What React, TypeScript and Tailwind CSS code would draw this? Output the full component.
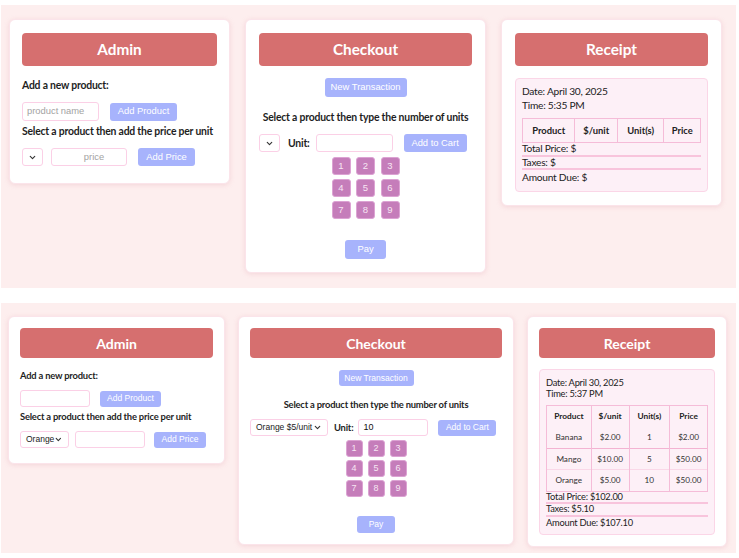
import { ChevronDown } from "lucide-react";

const btn =
  "bg-[#a7b3fc] text-white rounded-[3px] flex items-center justify-center [font-family:'Liberation_Sans',Arial,sans-serif]";
const field = "bg-white border border-[#fbd0e6] rounded-[3px]";

function Card({ className, children }: { className: string; children: React.ReactNode }) {
  return (
    <div
      className={`bg-white rounded-[6px] border border-[#fbe4ea] shadow-[0_1px_5px_rgba(224,150,165,0.28)] ${className}`}
    >
      {children}
    </div>
  );
}

function Header({ title, sm }: { title: string; sm?: boolean }) {
  return (
    <div
      className={`${
        sm ? "h-[30px] text-[14px]" : "h-[33px] text-[15.3px]"
      } bg-[#d66f6f] rounded-[4px] flex items-center justify-center text-white font-bold`}
    >
      {title}
    </div>
  );
}

function Select({ label, className }: { label?: string; className: string }) {
  return (
    <div
      className={`${field} ${className} flex items-center justify-between pl-[5px] pr-[5px] text-[#222] [font-family:'Liberation_Sans',Arial,sans-serif]`}
    >
      <span>{label}</span>
      <ChevronDown size={9} strokeWidth={3} className="text-[#333] ml-auto" />
    </div>
  );
}

function Admin({ sm }: { sm?: boolean }) {
  const label = sm
    ? "text-[9.4px] leading-[13px] tracking-[-0.2px]"
    : "text-[10.4px] leading-[15px] tracking-[-0.2px]";
  const small = sm ? "text-[8.5px]" : "text-[9.4px]";
  return (
    <Card className={sm ? "w-[217px] px-[11px] pt-[11px] pb-[15px]" : "w-[221px] px-[12px] pt-[13px] pb-[17px]"}>
      <Header title="Admin" sm={sm} />
      <p className={`${label} ${sm ? "mt-[11px]" : "mt-[12px]"} font-bold text-[#1e1e1e] whitespace-nowrap`}>
        Add a new product:
      </p>
      <div className={`flex items-center ${sm ? "mt-[8px] gap-[10px]" : "mt-[9px] gap-[11px]"}`}>
        <div
          className={`${field} ${small} ${
            sm ? "w-[70px] h-[17px]" : "w-[77px] h-[19px]"
          } flex items-center pl-[4px] text-[#a3a3a3] [font-family:'Liberation_Sans',Arial,sans-serif]`}
        >
          {sm ? "" : "product name"}
        </div>
        <button className={`${btn} ${small} ${sm ? "w-[61px] h-[16px]" : "w-[67px] h-[18px]"}`}>Add Product</button>
      </div>
      <p className={`${label} mt-[3px] font-bold text-[#1e1e1e] whitespace-nowrap`}>
        Select a product then add the price per unit
      </p>
      <div className={`flex items-center ${sm ? "mt-[8px]" : "mt-[9px]"}`}>
        <Select label={sm ? "Orange" : ""} className={`${small} ${sm ? "w-[49px] h-[17px]" : "w-[21px] h-[18px]"}`} />
        <div
          className={`${field} ${small} ${
            sm ? "ml-[6px] w-[70px] h-[17px]" : "ml-[8px] w-[76px] h-[18px]"
          } flex items-center justify-center pl-[10px] text-[#a3a3a3] [font-family:'Liberation_Sans',Arial,sans-serif]`}
        >
          {sm ? "" : "price"}
        </div>
        <button className={`${btn} ${small} ${sm ? "ml-[9px] w-[52px] h-[16px]" : "ml-[11px] w-[57px] h-[18px]"}`}>
          Add Price
        </button>
      </div>
    </Card>
  );
}

function Checkout({ sm }: { sm?: boolean }) {
  const label = sm
    ? "text-[9.4px] leading-[13px] tracking-[-0.2px]"
    : "text-[10.4px] leading-[15px] tracking-[-0.2px]";
  const small = sm ? "text-[8.5px]" : "text-[9.4px]";
  const keys = ["1", "2", "3", "4", "5", "6", "7", "8", "9"];
  return (
    <Card className={sm ? "w-[276px] px-[11px] pt-[11px] pb-[11px]" : "w-[241px] px-[13px] pt-[13px] pb-[13px]"}>
      <Header title="Checkout" sm={sm} />
      <div className="flex justify-center mt-[12px]">
        <button className={`${btn} ${small} ${sm ? "w-[75px] h-[16px]" : "w-[82px] h-[19px]"}`}>New Transaction</button>
      </div>
      <p className={`${label} ${sm ? "mt-[12px]" : "mt-[13px]"} text-center font-bold text-[#1e1e1e] whitespace-nowrap`}>
        Select a product then type the number of units
      </p>
      <div className={`flex items-center ${sm ? "mt-[8px]" : "mt-[9px]"}`}>
        <Select
          label={sm ? "Orange $5/unit" : ""}
          className={`${small} ${sm ? "w-[78px] h-[17px]" : "w-[21px] h-[18px]"}`}
        />
        <span className={`${label} font-bold text-[#1e1e1e] ${sm ? "ml-[6px]" : "ml-[8px]"}`}>Unit:</span>
        <div
          className={`${field} ${
            sm ? "ml-[5px] w-[70px] h-[17px] text-[9px]" : "ml-[6px] w-[77px] h-[18px]"
          } flex items-center pl-[4px] text-[#111] [font-family:'Liberation_Sans',Arial,sans-serif]`}
        >
          {sm ? "10" : ""}
        </div>
        <button className={`${btn} ${small} ${sm ? "ml-[10px] w-[58px] h-[16px]" : "ml-[11px] w-[63px] h-[18px]"}`}>
          Add to Cart
        </button>
      </div>
      <div
        className={`grid justify-center ${
          sm
            ? "mt-[4px] grid-cols-[repeat(3,17px)] gap-x-[5px] gap-y-[3px]"
            : "mt-[5px] grid-cols-[repeat(3,19px)] gap-x-[5.5px] gap-y-[4px]"
        }`}
      >
        {keys.map((k) => (
          <button
            key={k}
            className={`${
              sm ? "h-[17px] text-[9px]" : "h-[18px] text-[9.5px]"
            } bg-[#c57dba] border border-[#dca3d3] rounded-[3px] text-[#f7e6f3] flex items-center justify-center [font-family:'Liberation_Sans',Arial,sans-serif]`}
          >
            {k}
          </button>
        ))}
      </div>
      <div className={`flex justify-center ${sm ? "mt-[19px]" : "mt-[21px]"}`}>
        <button className={`${btn} ${small} ${sm ? "w-[38px] h-[17px]" : "w-[41px] h-[19px]"}`}>Pay</button>
      </div>
    </Card>
  );
}

type Item = { name: string; unit: string; qty: string; price: string };

function Receipt({
  sm,
  time,
  items,
  total,
  taxes,
  due,
}: {
  sm?: boolean;
  time: string;
  items: Item[];
  total: string;
  taxes: string;
  due: string;
}) {
  const txt = sm
    ? "text-[9.3px] leading-[11px] tracking-[-0.25px]"
    : "text-[10.2px] leading-[13.7px] tracking-[-0.25px]";
  const sum = sm
    ? "text-[9.3px] leading-[10.7px] tracking-[-0.25px]"
    : "text-[10.2px] leading-[11.4px] tracking-[-0.25px]";
  const cols = sm ? ["w-[45px]", "w-[38px]", "w-[41px]", "w-[38px]"] : ["w-[53px]", "w-[43px]", "w-[47px]", "w-[37px]"];
  const cell = "border-x border-[#f5bcd8] text-center";
  return (
    <Card className={sm ? "w-[200px] px-[11px] pt-[11px] pb-[11px]" : "w-[221px] px-[13px] pt-[13px] pb-[13px]"}>
      <Header title="Receipt" sm={sm} />
      <div
        className={`${
          sm ? "mt-[11px] pt-[7px]" : "mt-[12px] pt-[6px]"
        } px-[6px] pb-[6px] bg-[#fdf0f7] border border-[#fbd6e7] rounded-[4px] text-[#222]`}
      >
        <p className={`${txt} whitespace-nowrap`}>Date: April 30, 2025</p>
        <p className={txt}>Time: {time}</p>
        <table className="mt-[6px] w-full border-collapse border border-[#f5bcd8]">
          <thead>
            <tr className={sm ? "h-[21px] text-[8.3px]" : "h-[24px] text-[9.4px]"}>
              {["Product", "$/unit", "Unit(s)", "Price"].map((h, i) => (
                <th key={h} className={`${cell} ${cols[i]} font-bold`}>
                  {h}
                </th>
              ))}
            </tr>
          </thead>
          <tbody>
            {items.map((it, r) => (
              <tr
                key={it.name}
                className={`h-[21.5px] text-[8.2px] text-[#333] ${
                  r === 0 ? "border-b border-[#f3b3d2]" : r === 1 ? "border-b border-[#fad8e8]" : ""
                }`}
              >
                <td className={cell}>{it.name}</td>
                <td className={cell}>{it.unit}</td>
                <td className={cell}>{it.qty}</td>
                <td className={cell}>{it.price}</td>
              </tr>
            ))}
          </tbody>
        </table>
        <p className={`${sum} border-b-2 border-[#f8c4dc]`}>Total Price: ${total}</p>
        <p className={`${sum} border-b-2 border-[#f8c4dc]`}>Taxes: ${taxes}</p>
        <p className={`${txt} ${sm ? "" : "pt-[1px]"} whitespace-nowrap`}>Amount Due: ${due}</p>
      </div>
    </Card>
  );
}

export default function App() {
  const items: Item[] = [
    { name: "Banana", unit: "$2.00", qty: "1", price: "$2.00" },
    { name: "Mango", unit: "$10.00", qty: "5", price: "$50.00" },
    { name: "Orange", unit: "$5.00", qty: "10", price: "$50.00" },
  ];
  return (
    <div className="w-[739px] h-[558px] bg-white overflow-hidden [font-family:Lato,'Noto_Sans',sans-serif]">
      <div className="mt-[5px] ml-[1px] w-[735px] h-[283px] bg-[#fdeeee] pl-[8px] pt-[14px] flex items-start gap-[15px]">
        <Admin />
        <Checkout />
        <Receipt time="5:35 PM" items={[]} total="" taxes="" due="" />
      </div>
      <div className="mt-[15px] ml-[1px] w-[735px] h-[250px] bg-[#fdeeee] pl-[7px] pt-[13px] flex items-start gap-[13px]">
        <Admin sm />
        <Checkout sm />
        <Receipt sm time="5:37 PM" items={items} total="102.00" taxes="5.10" due="107.10" />
      </div>
    </div>
  );
}
